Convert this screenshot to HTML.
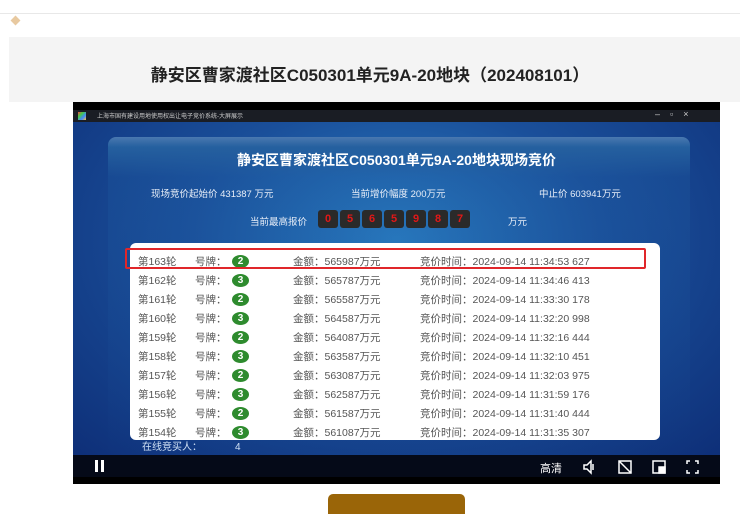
<!DOCTYPE html>
<html><head><meta charset="utf-8"><style>
*{margin:0;padding:0;box-sizing:border-box}
body{width:740px;height:511px;background:#fff;position:relative;overflow:hidden;font-family:"Liberation Sans","Noto Sans CJK SC",sans-serif}
.a{position:absolute;white-space:nowrap}
.row{position:absolute;left:0;width:530px;height:19px;font-size:10.5px;color:#555}
.row span{position:absolute;top:3px}
.row span.b{top:4px}
.b{display:inline-block;width:17px;height:13px;border-radius:50%;background:#2e8b2e;color:#fff;font-weight:bold;font-size:10px;text-align:center;line-height:13px}
.d{position:absolute;top:0;width:20px;height:18px;background:#2a2a2a;border-radius:3px;color:#e01818;font-weight:bold;font-size:11px;text-align:center;line-height:18px}
</style></head><body>
<div class="a" style="left:0;top:13px;width:740px;height:1px;background:#e8e8e8"></div>
<div class="a" style="left:12px;top:17px;width:7px;height:7px;background:#e8c9a0;transform:rotate(45deg)"></div>
<div class="a" style="left:9px;top:37px;width:731px;height:65px;background:#f4f4f4"></div>
<div class="a" style="left:0;width:740px;top:61px;text-align:center;font-size:17px;font-weight:bold;color:#222">静安区曹家渡社区C050301单元9A-20地块（202408101）</div>

<div class="a" style="left:73px;top:102px;width:647px;height:382px;background:#000">
 <div class="a" style="left:0;top:8px;width:647px;height:12px;background:#1a1d24"></div>
 <div class="a" style="left:5px;top:10px;width:8px;height:8px;background:linear-gradient(135deg,#e44,#4c4,#48f,#fc3)"></div>
 <div class="a" style="left:24px;top:9px;font-size:6px;color:#ccc">上海市国有建设用地使用权出让电子竞价系统-大屏展示</div>
 <div class="a" style="left:582px;top:7px;font-size:9px;color:#ccc;letter-spacing:10px">–▫×</div>
 <div class="a" style="left:0;top:20px;width:647px;height:334px;background:radial-gradient(ellipse at 50% 35%,#2a7fc4 0%,#1a4f9a 45%,#0e2f78 100%)"></div>
 <div class="a" style="left:35px;top:35px;width:582px;height:319px;border-radius:8px 8px 0 0;background:linear-gradient(#4a78b0 0,#25609f 10px,rgba(30,90,160,.3) 40px,rgba(0,0,0,0) 100%)"></div>
 <div class="a" style="left:0;width:647px;top:48px;text-align:center;font-size:14px;font-weight:bold;color:#fff">静安区曹家渡社区C050301单元9A-20地块现场竞价</div>
 <div class="a" style="left:78px;top:84px;font-size:9.5px;color:#e8eef8">现场竞价起始价 431387 万元</div>
 <div class="a" style="left:278px;top:84px;font-size:9.5px;color:#e8eef8">当前增价幅度 200万元</div>
 <div class="a" style="left:466px;top:84px;font-size:9.5px;color:#e8eef8">中止价 603941万元</div>
 <div class="a" style="left:177px;top:112px;font-size:9.5px;color:#e8eef8">当前最高报价</div>
 <div class="a" style="left:245px;top:108px;width:160px;height:18px">
  <div class="d" style="left:0">0</div><div class="d" style="left:22px">5</div><div class="d" style="left:44px">6</div><div class="d" style="left:66px">5</div><div class="d" style="left:88px">9</div><div class="d" style="left:110px">8</div><div class="d" style="left:132px">7</div>
 </div>
 <div class="a" style="left:435px;top:112px;font-size:9.5px;color:#e8eef8">万元</div>
 <div class="a" style="left:57px;top:141px;width:530px;height:197px;background:#fff;border-radius:6px">
  <div class="row" style="top:8px"><span style="left:8px">第163轮</span><span style="left:65px">号牌：</span><span style="left:102px" class="b">2</span><span style="left:163px">金额：565987万元</span><span style="left:290px">竞价时间：2024-09-14 11:34:53 627</span></div>
  <div class="row" style="top:27px"><span style="left:8px">第162轮</span><span style="left:65px">号牌：</span><span style="left:102px" class="b">3</span><span style="left:163px">金额：565787万元</span><span style="left:290px">竞价时间：2024-09-14 11:34:46 413</span></div>
  <div class="row" style="top:46px"><span style="left:8px">第161轮</span><span style="left:65px">号牌：</span><span style="left:102px" class="b">2</span><span style="left:163px">金额：565587万元</span><span style="left:290px">竞价时间：2024-09-14 11:33:30 178</span></div>
  <div class="row" style="top:65px"><span style="left:8px">第160轮</span><span style="left:65px">号牌：</span><span style="left:102px" class="b">3</span><span style="left:163px">金额：564587万元</span><span style="left:290px">竞价时间：2024-09-14 11:32:20 998</span></div>
  <div class="row" style="top:84px"><span style="left:8px">第159轮</span><span style="left:65px">号牌：</span><span style="left:102px" class="b">2</span><span style="left:163px">金额：564087万元</span><span style="left:290px">竞价时间：2024-09-14 11:32:16 444</span></div>
  <div class="row" style="top:103px"><span style="left:8px">第158轮</span><span style="left:65px">号牌：</span><span style="left:102px" class="b">3</span><span style="left:163px">金额：563587万元</span><span style="left:290px">竞价时间：2024-09-14 11:32:10 451</span></div>
  <div class="row" style="top:122px"><span style="left:8px">第157轮</span><span style="left:65px">号牌：</span><span style="left:102px" class="b">2</span><span style="left:163px">金额：563087万元</span><span style="left:290px">竞价时间：2024-09-14 11:32:03 975</span></div>
  <div class="row" style="top:141px"><span style="left:8px">第156轮</span><span style="left:65px">号牌：</span><span style="left:102px" class="b">3</span><span style="left:163px">金额：562587万元</span><span style="left:290px">竞价时间：2024-09-14 11:31:59 176</span></div>
  <div class="row" style="top:160px"><span style="left:8px">第155轮</span><span style="left:65px">号牌：</span><span style="left:102px" class="b">2</span><span style="left:163px">金额：561587万元</span><span style="left:290px">竞价时间：2024-09-14 11:31:40 444</span></div>
  <div class="row" style="top:179px"><span style="left:8px">第154轮</span><span style="left:65px">号牌：</span><span style="left:102px" class="b">3</span><span style="left:163px">金额：561087万元</span><span style="left:290px">竞价时间：2024-09-14 11:31:35 307</span></div>
 </div>
 <div class="a" style="left:52px;top:146px;width:521px;height:21px;border:2px solid #e0262a;border-radius:2px"></div>
 <div class="a" style="left:69px;top:340px;font-size:10px;line-height:12px;color:#cfe0f5">在线竞买人：</div>
 <div class="a" style="left:162px;top:340px;font-size:10px;line-height:12px;color:#cfe0f5">4</div>
 <div class="a" style="left:0;top:353px;width:647px;height:22px;background:#050a18"></div>
 <div class="a" style="left:22px;top:358px;width:3px;height:12px;background:#fff"></div>
 <div class="a" style="left:28px;top:358px;width:3px;height:12px;background:#fff"></div>
 <div class="a" style="left:467px;top:358px;font-size:11px;color:#fff">高清</div>
 <svg class="a" style="left:508px;top:357px" width="180" height="16" fill="none" stroke="#fff" stroke-width="1.5">
  <path d="M3 6h3l4-4v12l-4-4H3z M12 5v6"/>
  <rect x="38" y="2" width="12" height="12"/><path d="M38 2l12 12"/>
  <rect x="72" y="2" width="12" height="12"/><rect x="78" y="8" width="6" height="6" fill="#fff"/>
  <path d="M106 5V2h3 M114 2h3v3 M117 11v3h-3 M109 14h-3v-3"/>
 </svg>
</div>
<div class="a" style="left:328px;top:494px;width:137px;height:20px;background:#9a6508;border-radius:5px 5px 0 0"></div>
</body></html>
